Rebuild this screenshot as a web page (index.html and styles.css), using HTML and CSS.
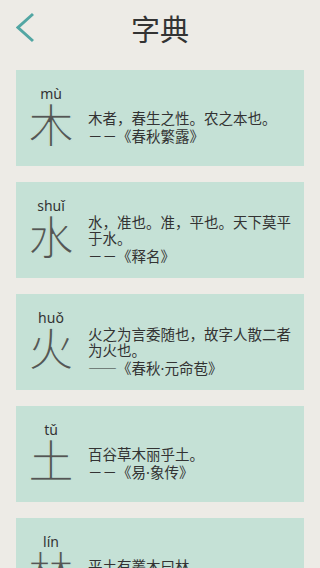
FILE: index.html
```html
<!DOCTYPE html>
<html lang="zh">
<head>
  <meta charset="UTF-8">
  <meta name="viewport" content="width=device-width, initial-scale=1.0">
  <title>字典</title>
  <link rel="stylesheet" href="styles.css">
</head>
<body>
  <!-- Top bar -->
  <div class="topbar">
    <a class="back" href="#">
      <svg width="20" height="32" viewBox="0 0 20 32">
        <polyline points="17,2 2,15.5 17,29" fill="none" stroke="#52a6a3" stroke-width="3" stroke-linecap="butt" stroke-linejoin="miter"/>
      </svg>
    </a>
    <h1>字典</h1>
    <span></span>
  </div>

  <!-- Entries -->
  <div class="list">
    <div class="card">
      <div class="pinyin">mù</div>
      <div class="big">木</div>
      <div class="quote">
        <p>木者，春生之性。农之本也。</p>
        <p class="src">－－《春秋繁露》</p>
      </div>
    </div>

    <div class="card">
      <div class="pinyin">shuǐ</div>
      <div class="big">水</div>
      <div class="quote">
        <p>水，准也。准，平也。天下莫平于水。</p>
        <p class="src">－－《释名》</p>
      </div>
    </div>

    <div class="card">
      <div class="pinyin">huǒ</div>
      <div class="big">火</div>
      <div class="quote">
        <p>火之为言委随也，故字人散二者为火也。</p>
        <p class="src">——《春秋<span class="dot">·</span>元命苞》</p>
      </div>
    </div>

    <div class="card">
      <div class="pinyin">tǔ</div>
      <div class="big">土</div>
      <div class="quote">
        <p>百谷草木丽乎土。</p>
        <p class="src">－－《易<span class="dot">·</span>象传》</p>
      </div>
    </div>

    <div class="card">
      <div class="pinyin">lín</div>
      <div class="big">林</div>
      <div class="quote">
        <p>平土有叢木曰林。</p>
        <p class="src">－－《说文解字》</p>
      </div>
    </div>
  </div>
</body>
</html>
```

FILE: styles.css
```css
body {
  margin: 0;
  background: #edebe6;
  font-family: "Noto Sans CJK SC", "Noto Sans", sans-serif;
  color: #3a3a3a;
}
.topbar {
  display: grid;
  grid-template-columns: 48px 1fr 48px;
  align-items: center;
  height: 56px;
}
.back {
  display: flex;
  padding-left: 16px;
}
.topbar h1 {
  margin: 0;
  text-align: center;
  font-size: 29px;
  font-weight: 400;
  line-height: 56px;
  color: #333;
}
.list {
  padding: 14px 16px 0;
  display: flex;
  flex-direction: column;
  gap: 16px;
}
.card {
  background: #c5e1d6;
  height: 96px;
  box-sizing: border-box;
  padding: 15px 8px 0 12px;
  display: grid;
  grid-template-columns: 46px 1fr;
  grid-template-rows: 14px 56px;
  column-gap: 14px;
  overflow: hidden;
}
.pinyin {
  grid-column: 1;
  grid-row: 1;
  align-self: start;
  text-align: center;
  font-family: "Noto Sans", sans-serif;
  font-size: 14px;
  line-height: 18px;
  color: #333;
}
.big {
  grid-column: 1;
  grid-row: 2;
  align-self: start;
  text-align: center;
  font-size: 46px;
  line-height: 46px;
  color: #555;
  -webkit-text-stroke: 1.4px #c5e1d6;
}
.quote {
  grid-column: 2;
  grid-row: 2;
  align-self: center;
  font-size: 14.5px;
  line-height: 16px;
  color: #333;
}
.quote p {
  margin: 0;
}
.quote .src {
  margin-top: 2px;
}
.dot {
  font-family: "Noto Sans", sans-serif;
}
```
